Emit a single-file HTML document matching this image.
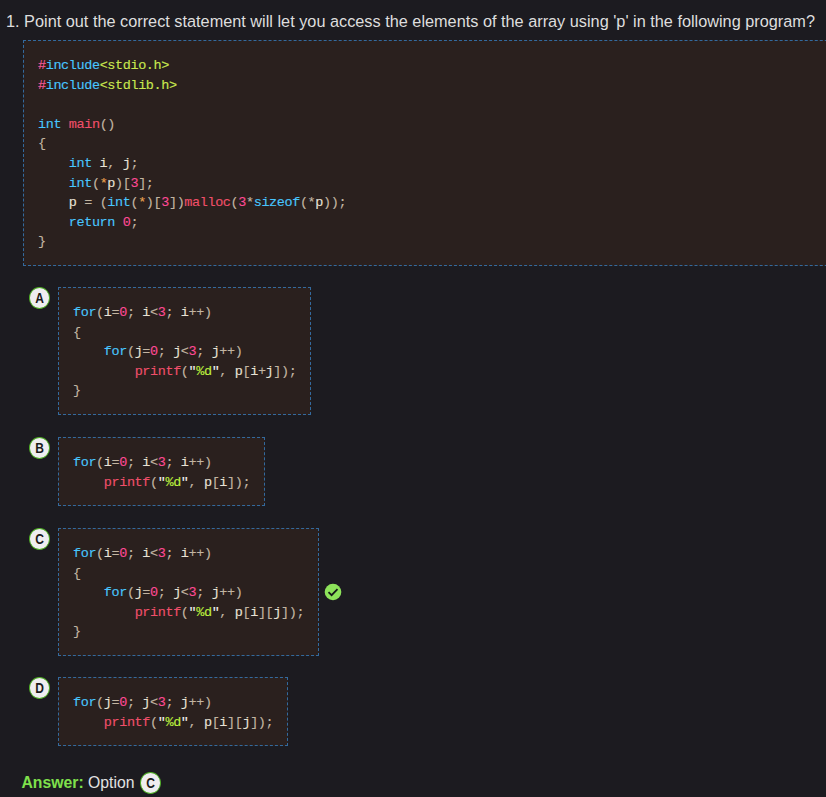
<!DOCTYPE html>
<html><head><meta charset="utf-8">
<style>
html,body{margin:0;padding:0;}
body{width:826px;height:797px;overflow:hidden;background:#1c1b20;position:relative;font-family:"Liberation Sans",sans-serif;}
.q{position:absolute;left:6px;top:12px;white-space:nowrap;font-size:16.3px;color:#dedede;}
.code{position:absolute;box-sizing:border-box;background:#2a201e;border:1px dashed #336a9e;padding:15px 14px 13px 14px;-webkit-text-stroke:0.12px currentColor;
 font-family:"Liberation Mono",monospace;font-size:13.5px;line-height:19.6px;letter-spacing:-0.4px;white-space:pre;color:#e8e2d6;}
.k{color:#48c6ff}.h{color:#ff5a9c}.s{color:#c9e84f}.n{color:#ff4a96}.p{color:#c2b5a2}.f{color:#f04f6a}.g{color:#bdef3e}.w{color:#f0f0f0}.o{color:#e8a050}
.opt{position:absolute;left:29px;width:21px;height:21.6px;box-sizing:border-box;border-radius:50%;background:#efedf0;border:1.2px solid #4cac22;
 font-weight:bold;font-size:14px;color:#1a1a1a;text-align:center;line-height:21px;}
.opt i{font-style:normal;display:inline-block;transform:translateX(0.5px) scaleX(0.86);}
.ans{position:absolute;left:21.5px;top:773.5px;font-size:15.75px;color:#e2e2e2;white-space:nowrap;}
.ans b{color:#7fe04c;}
</style></head><body>
<div class="q">1. Point out the correct statement will let you access the elements of the array using 'p' in the following program?</div>

<div class="code" style="left:23px;top:40px;width:900px;height:226px;"><span class="h">#</span><span class="k">include</span><span class="s">&lt;stdio.h&gt;</span>
<span class="h">#</span><span class="k">include</span><span class="s">&lt;stdlib.h&gt;</span>

<span class="k">int</span> <span class="f">main</span><span class="p">()</span>
<span class="p">{</span>
    <span class="k">int</span> i<span class="p">,</span> j<span class="p">;</span>
    <span class="k">int</span><span class="p">(</span><span class="o">*</span>p<span class="p">)[</span><span class="n">3</span><span class="p">];</span>
    p <span class="p">=</span> <span class="p">(</span><span class="k">int</span><span class="p">(</span><span class="o">*</span><span class="p">)[</span><span class="n">3</span><span class="p">])</span><span class="f">malloc</span><span class="p">(</span><span class="n">3</span><span class="p">*</span><span class="k">sizeof</span><span class="p">(*</span>p<span class="p">));</span>
    <span class="k">return</span> <span class="n">0</span><span class="p">;</span>
<span class="p">}</span></div>

<div class="opt" style="top:287px;"><i>A</i></div>
<div class="code" style="left:58px;top:287px;width:253px;height:128px;"><span class="k">for</span><span class="p">(</span>i<span class="p">=</span><span class="n">0</span><span class="p">;</span> i<span class="p">&lt;</span><span class="n">3</span><span class="p">;</span> i<span class="p">++)</span>
<span class="p">{</span>
    <span class="k">for</span><span class="p">(</span>j<span class="p">=</span><span class="n">0</span><span class="p">;</span> j<span class="p">&lt;</span><span class="n">3</span><span class="p">;</span> j<span class="p">++)</span>
        <span class="f">printf</span><span class="p">(</span><span class="w">"</span><span class="g">%d</span><span class="w">"</span><span class="p">,</span> p<span class="p">[</span>i<span class="p">+</span>j<span class="p">]);</span>
<span class="p">}</span></div>

<div class="opt" style="top:437px;"><i>B</i></div>
<div class="code" style="left:58px;top:437px;width:207px;height:69px;"><span class="k">for</span><span class="p">(</span>i<span class="p">=</span><span class="n">0</span><span class="p">;</span> i<span class="p">&lt;</span><span class="n">3</span><span class="p">;</span> i<span class="p">++)</span>
    <span class="f">printf</span><span class="p">(</span><span class="w">"</span><span class="g">%d</span><span class="w">"</span><span class="p">,</span> p<span class="p">[</span>i<span class="p">]);</span></div>

<div class="opt" style="top:528px;"><i>C</i></div>
<div class="code" style="left:58px;top:528px;width:261px;height:128px;"><span class="k">for</span><span class="p">(</span>i<span class="p">=</span><span class="n">0</span><span class="p">;</span> i<span class="p">&lt;</span><span class="n">3</span><span class="p">;</span> i<span class="p">++)</span>
<span class="p">{</span>
    <span class="k">for</span><span class="p">(</span>j<span class="p">=</span><span class="n">0</span><span class="p">;</span> j<span class="p">&lt;</span><span class="n">3</span><span class="p">;</span> j<span class="p">++)</span>
        <span class="f">printf</span><span class="p">(</span><span class="w">"</span><span class="g">%d</span><span class="w">"</span><span class="p">,</span> p<span class="p">[</span>i<span class="p">][</span>j<span class="p">]);</span>
<span class="p">}</span></div>
<svg style="position:absolute;left:324px;top:582.5px;" width="18" height="18" viewBox="0 0 18 18"><circle cx="9" cy="9" r="8.3" fill="#8de35a"/><path d="M4.5 9.2 L7.6 12.2 L13.5 6.2" fill="none" stroke="#16191a" stroke-width="1.8"/></svg>

<div class="opt" style="top:677px;"><i>D</i></div>
<div class="code" style="left:58px;top:677px;width:230px;height:69px;"><span class="k">for</span><span class="p">(</span>j<span class="p">=</span><span class="n">0</span><span class="p">;</span> j<span class="p">&lt;</span><span class="n">3</span><span class="p">;</span> j<span class="p">++)</span>
    <span class="f">printf</span><span class="p">(</span><span class="w">"</span><span class="g">%d</span><span class="w">"</span><span class="p">,</span> p<span class="p">[</span>i<span class="p">][</span>j<span class="p">]);</span></div>

<div class="ans"><b>Answer:</b> Option <span class="opt" style="position:absolute;left:118px;top:-1.5px;"><i>C</i></span></div>
</body></html>
